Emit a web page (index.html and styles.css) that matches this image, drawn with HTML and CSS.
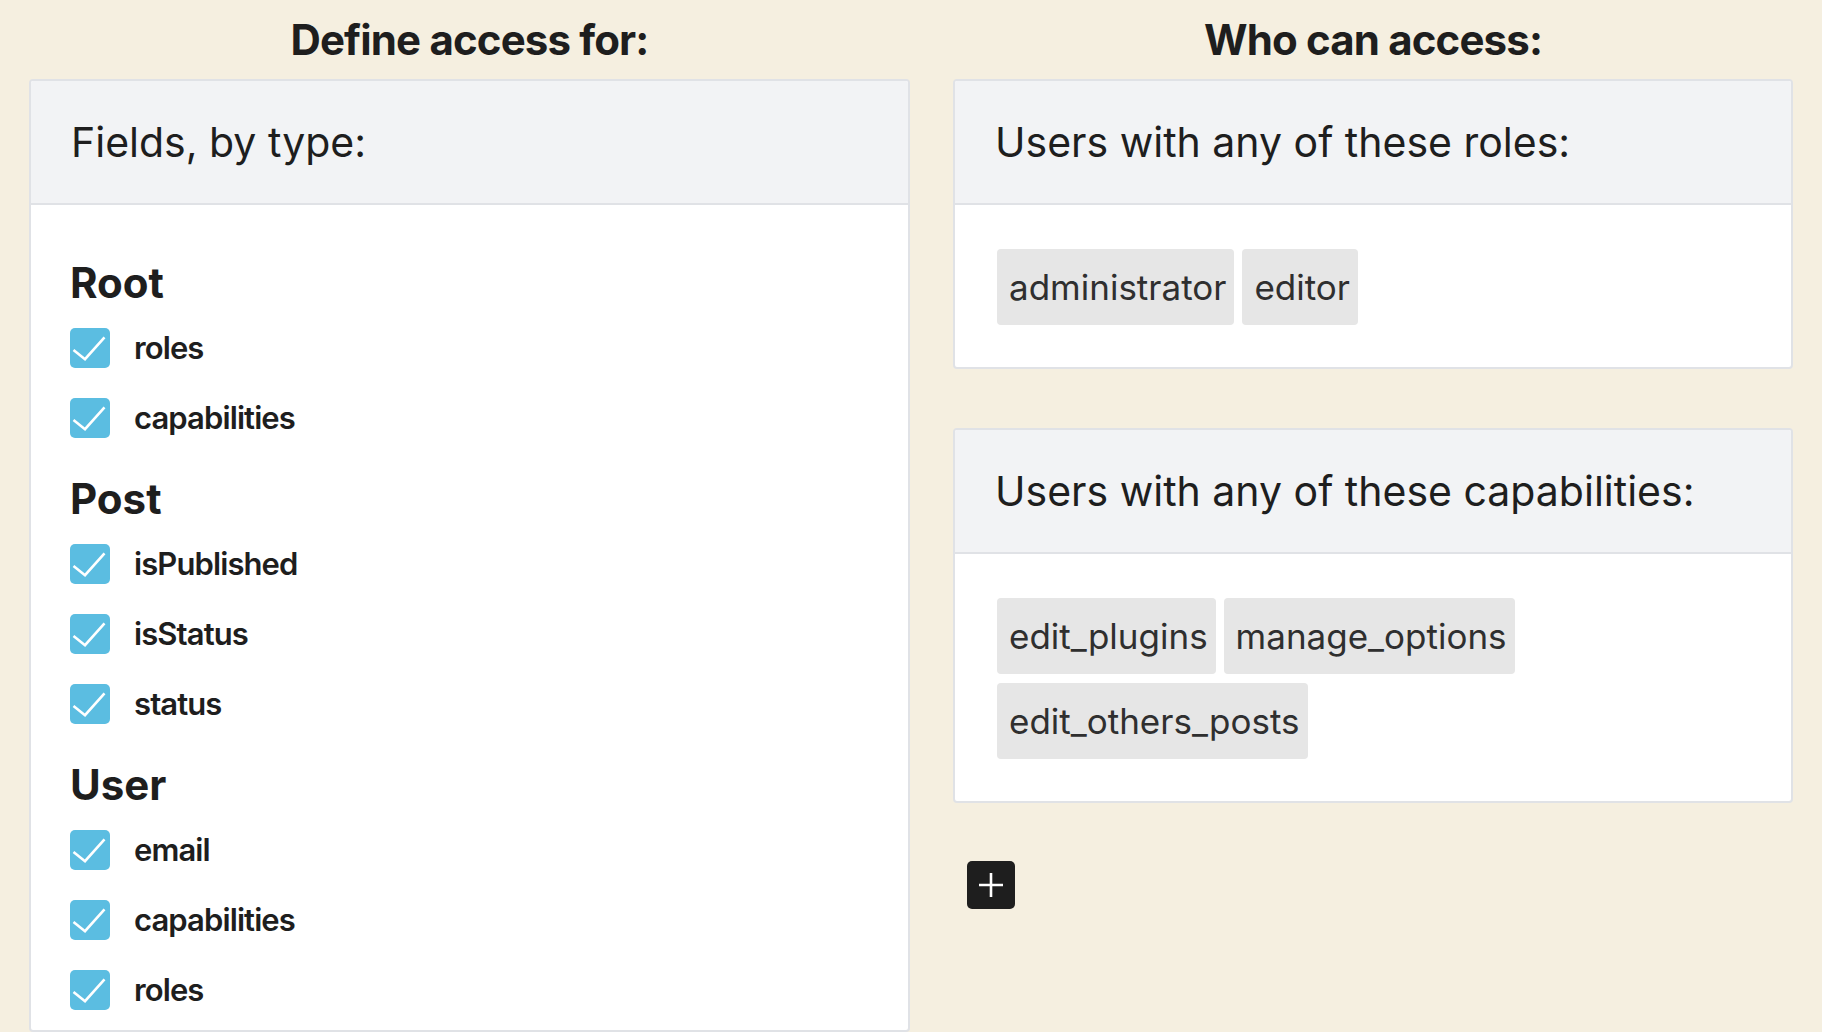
FILE: index.html
```html
<!DOCTYPE html>
<html lang="en">
<head>
<meta charset="utf-8">
<title>Access rules</title>
<link rel="stylesheet" href="styles.css">
</head>
<body>
<div class="page">
  <section class="col col-left">
    <h2 class="col-title">Define access for:</h2>
    <div class="panel panel-fields">
      <div class="panel-header">Fields, by type:</div>
      <div class="panel-body fields-body">
        <div class="group">
          <h3 class="group-title">Root</h3>
          <label class="check-row"><span class="checkbox"><svg viewBox="0 0 40 40" width="40" height="40"><polyline points="3.5,22 15,31.2 34.5,9.4" /></svg></span><span class="check-label">roles</span></label>
          <label class="check-row"><span class="checkbox"><svg viewBox="0 0 40 40" width="40" height="40"><polyline points="3.5,22 15,31.2 34.5,9.4" /></svg></span><span class="check-label">capabilities</span></label>
        </div>
        <div class="group">
          <h3 class="group-title">Post</h3>
          <label class="check-row"><span class="checkbox"><svg viewBox="0 0 40 40" width="40" height="40"><polyline points="3.5,22 15,31.2 34.5,9.4" /></svg></span><span class="check-label">isPublished</span></label>
          <label class="check-row"><span class="checkbox"><svg viewBox="0 0 40 40" width="40" height="40"><polyline points="3.5,22 15,31.2 34.5,9.4" /></svg></span><span class="check-label">isStatus</span></label>
          <label class="check-row"><span class="checkbox"><svg viewBox="0 0 40 40" width="40" height="40"><polyline points="3.5,22 15,31.2 34.5,9.4" /></svg></span><span class="check-label">status</span></label>
        </div>
        <div class="group">
          <h3 class="group-title">User</h3>
          <label class="check-row"><span class="checkbox"><svg viewBox="0 0 40 40" width="40" height="40"><polyline points="3.5,22 15,31.2 34.5,9.4" /></svg></span><span class="check-label">email</span></label>
          <label class="check-row"><span class="checkbox"><svg viewBox="0 0 40 40" width="40" height="40"><polyline points="3.5,22 15,31.2 34.5,9.4" /></svg></span><span class="check-label">capabilities</span></label>
          <label class="check-row"><span class="checkbox"><svg viewBox="0 0 40 40" width="40" height="40"><polyline points="3.5,22 15,31.2 34.5,9.4" /></svg></span><span class="check-label">roles</span></label>
        </div>
      </div>
    </div>
  </section>
  <section class="col col-right">
    <h2 class="col-title">Who can access:</h2>
    <div class="panel">
      <div class="panel-header">Users with any of these roles:</div>
      <div class="panel-body tags-body">
        <span class="tag">administrator</span>
        <span class="tag">editor</span>
      </div>
    </div>
    <div class="panel panel-gap">
      <div class="panel-header">Users with any of these capabilities:</div>
      <div class="panel-body tags-body">
        <span class="tag">edit_plugins</span>
        <span class="tag">manage_options</span>
        <span class="tag">edit_others_posts</span>
      </div>
    </div>
    <button class="add-btn" type="button" aria-label="Add"><svg viewBox="0 0 24 24" width="24" height="24"><path d="M12 0v24M0 12h24" /></svg></button>
  </section>
</div>
</body>
</html>
```
FILE: styles.css
```css
* { box-sizing: border-box; }
html, body { margin: 0; padding: 0; }
body {
  background: #f5efe0;
  color: #1e1e1e;
  font-family: Inter, "Noto Sans", sans-serif;
  overflow: hidden;
}
.page {
  display: grid;
  grid-template-columns: 881px 840px;
  column-gap: 43px;
  padding: 0 29px;
  height: 1032px;
}
.col {
  display: flex;
  flex-direction: column;
  min-height: 0;
}
.col-title {
  margin: 13px 0 13px;
  font-size: 42px;
  line-height: 53px;
  font-weight: 700;
  letter-spacing: -0.85px;
  text-align: center;
}
.panel {
  background: #fff;
  border: 2px solid #e0e2e6;
  border-radius: 4px;
  overflow: hidden;
}
.panel-fields { flex: 1; }
.panel-gap { margin-top: 59px; }
.panel-header {
  background: #f2f3f5;
  border-bottom: 2px solid #e0e2e6;
  padding: 37px 40px;
  font-size: 41px;
  line-height: 48px;
  font-weight: 400;
}
.fields-body {
  padding: 54px 39px 0;
  display: flex;
  flex-direction: column;
  gap: 37px;
}
.group {
  display: flex;
  flex-direction: column;
  gap: 30px;
}
.group-title {
  margin: 0 0 -9px;
  font-size: 42px;
  line-height: 48px;
  font-weight: 700;
}
.check-row {
  display: flex;
  align-items: center;
  gap: 24px;
  height: 40px;
}
.checkbox {
  width: 40px;
  height: 40px;
  border-radius: 5px;
  background: #5bbde1;
  display: block;
  flex: none;
}
.checkbox svg { display: block; }
.checkbox polyline {
  fill: none;
  stroke: #fff;
  stroke-width: 2.6;
}
.check-label {
  font-size: 31px;
  line-height: 40px;
  font-weight: 600;
  letter-spacing: -0.9px;
}
.tags-body {
  padding: 44px 40px 42px 42px;
  display: flex;
  flex-wrap: wrap;
  gap: 9px 8px;
}
.tag {
  height: 76px;
  line-height: 76px;
  padding: 0 8px 0 12px;
  background: #e6e6e6;
  border-radius: 4px;
  color: #2f2f2f;
  font-size: 35px;
}
.add-btn {
  margin: 58px 0 0 14px;
  width: 48px;
  height: 48px;
  border: 0;
  border-radius: 5px;
  background: #1e1e1e;
  padding: 12px;
  display: flex;
  align-items: center;
  justify-content: center;
}
.add-btn svg { display: block; }
.add-btn path { stroke: #fff; stroke-width: 2.6; fill: none; }
```
